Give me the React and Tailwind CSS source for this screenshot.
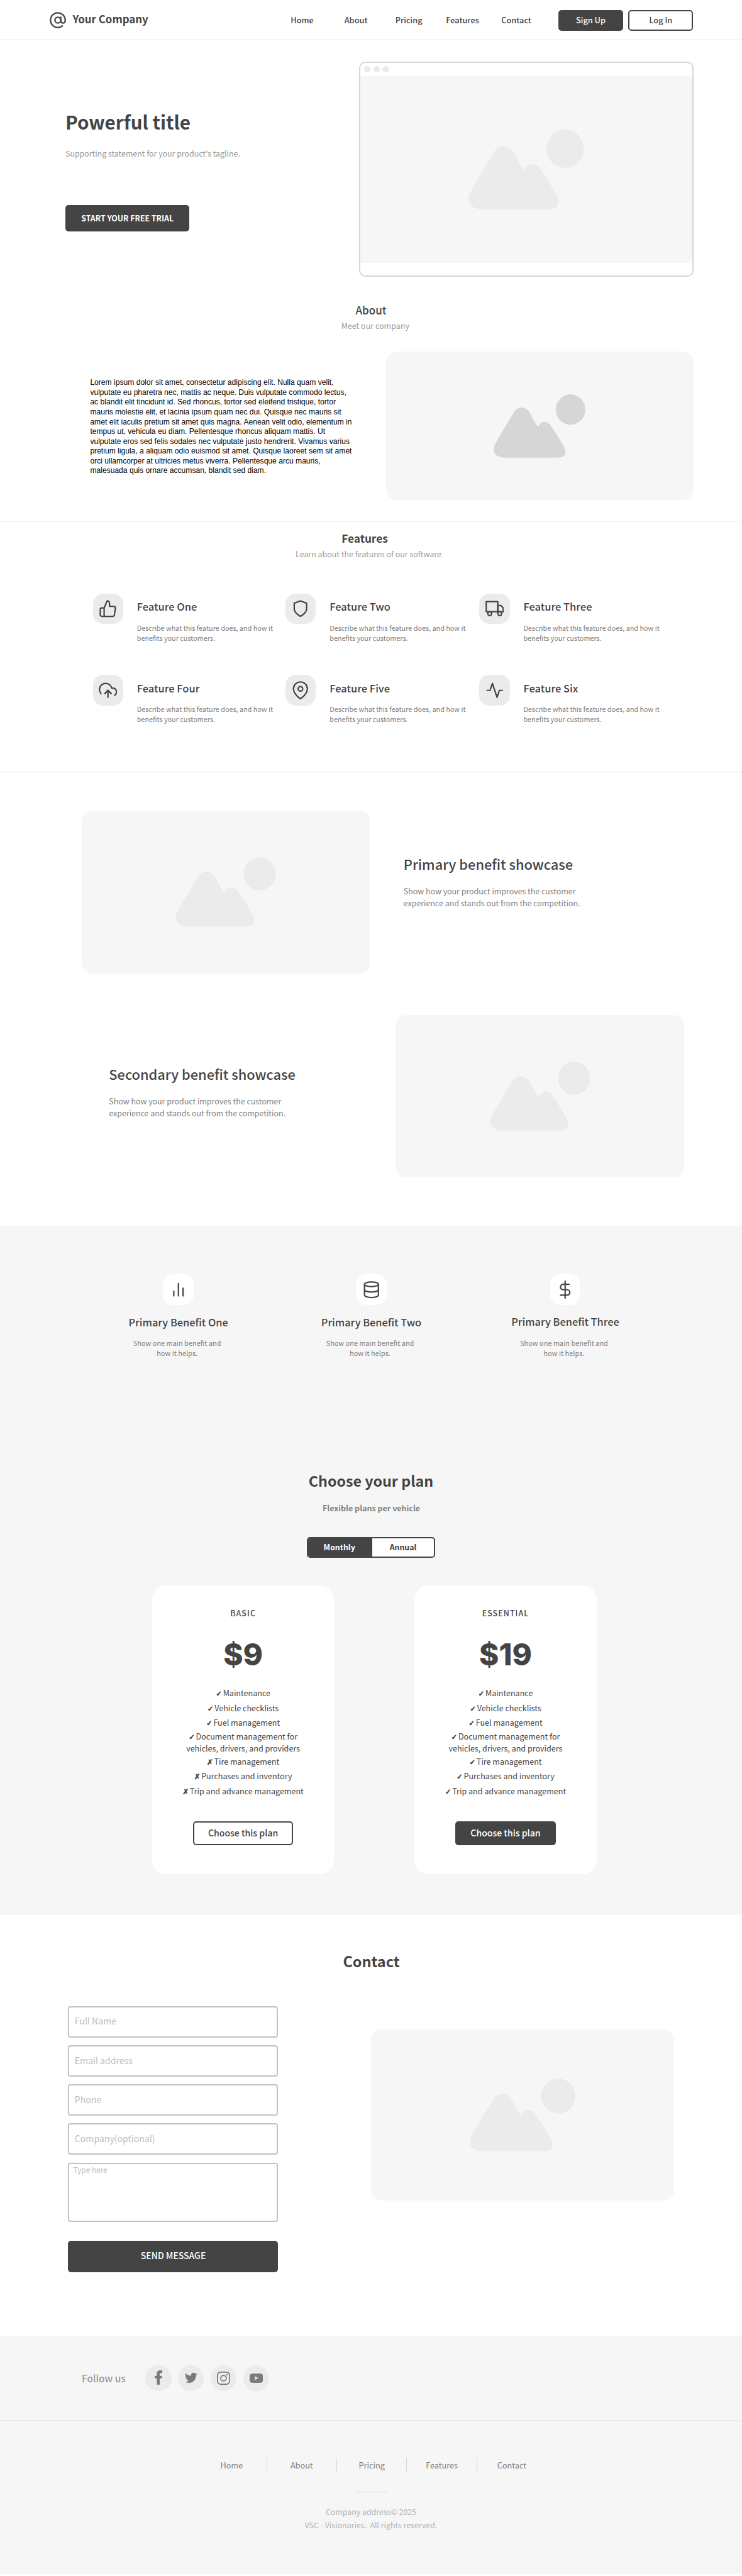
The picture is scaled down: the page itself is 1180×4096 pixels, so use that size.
import React from 'react';
import {
  FiActivity, FiAtSign, FiBarChart2, FiDatabase, FiDollarSign,
  FiMapPin, FiShield, FiThumbsUp, FiTruck, FiUploadCloud,
} from 'react-icons/fi';
import { FaTwitter } from 'react-icons/fa';

function Mountains({ className }) {
  return (
    <svg viewBox="0 0 637 441" fill="currentColor" className={className}>
      <path d="M192 92C170 92 152 106 139 128C100 195 40 290 12 343C4 355 0 370 0 383C0 420 35 440 76 440H446C480 440 499 425 499 401C499 385 494 374 488 363C460 310 420 253 396 217C385 200 370 191 352 191C335 191 318 205 308 226C290 203 272 168 256 136C241 108 218 92 192 92Z" />
      <ellipse cx="534" cy="106" rx="103" ry="105.5" />
    </svg>
  );
}

const nav = [
  ['Home', 'w-[85.5px]'],
  ['About', 'w-[81.1px]'],
  ['Pricing', 'w-[80.5px]'],
  ['Features', 'w-[88px]'],
  ['Contact', 'w-[90.7px]'],
];

function Header() {
  return (
    <header className="flex h-16 items-start border-b-2 border-[#f5f5f5] pl-[78px]">
      <FiAtSign className="mt-[17.5px] size-[28px]" />
      <span className="mt-[18px] ml-[9.5px] w-[346.7px] text-[16.86px] leading-6 font-bold">Your Company</span>
      <nav className="mt-[22.4px] flex text-[12.75px] leading-5 font-medium">
        {nav.map(([label, width]) => (
          <a key={label} className={width}>{label}</a>
        ))}
      </nav>
      <div className="mt-[15.5px] flex gap-[8.4px] text-[12.74px] leading-5 font-medium">
        <button className="flex h-[33px] w-[103px] items-center justify-center rounded-[5px] bg-[#444] pb-[1px] text-white">Sign Up</button>
        <button className="flex h-[33px] w-[103px] items-center justify-center rounded-[5px] border-2 border-[#444] pb-[1px]">Log In</button>
      </div>
    </header>
  );
}

function Hero() {
  return (
    <section className="flex h-[396px] items-start pl-[104px]">
      <div className="flex w-[467px] flex-col items-start pt-[110.3px]">
        <h1 className="text-[29.6px] leading-10 font-bold">Powerful title</h1>
        <p className="mt-[19.8px] text-[12.38px] leading-5 text-[#999]">Supporting statement for your product's tagline.</p>
        <button className="mt-[71.9px] h-[42px] w-[197.4px] rounded-[5px] bg-[#444] text-[12.34px] leading-5 font-bold text-white">START YOUR FREE TRIAL</button>
      </div>
      <div className="mt-[33.5px] flex h-[342px] w-[532px] flex-col overflow-hidden rounded-[10px] border-2 border-[#d6d6d6]">
        <div className="flex h-[21.6px] items-center gap-[4.3px] pl-[6px]">
          <i className="size-[10.4px] rounded-full bg-[#ebebeb]" />
          <i className="size-[10.4px] rounded-full bg-[#ebebeb]" />
          <i className="size-[10.4px] rounded-full bg-[#ebebeb]" />
        </div>
        <div className="flex h-[297px] items-center justify-center bg-[#f6f6f6]">
          <Mountains className="h-[127px] w-[183.3px] text-[#ebebeb]" />
        </div>
      </div>
    </section>
  );
}

const lorem = [
  'Lorem ipsum dolor sit amet, consectetur adipiscing elit. Nulla quam velit,',
  'vulputate eu pharetra nec, mattis ac neque. Duis vulputate commodo lectus,',
  'ac blandit elit tincidunt id. Sed rhoncus, tortor sed eleifend tristique, tortor',
  'mauris molestie elit, et lacinia ipsum quam nec dui. Quisque nec mauris sit',
  'amet elit iaculis pretium sit amet quis magna. Aenean velit odio, elementum in',
  'tempus ut, vehicula eu diam. Pellentesque rhoncus aliquam mattis. Ut',
  'vulputate eros sed felis sodales nec vulputate justo hendrerit. Vivamus varius',
  'pretium ligula, a aliquam odio euismod sit amet. Quisque laoreet sem sit amet',
  'orci ullamcorper at ultricies metus viverra. Pellentesque arcu mauris,',
  'malesuada quis ornare accumsan, blandit sed diam.',
];

function About() {
  return (
    <section className="h-[370px] border-b-2 border-[#f5f5f5] pt-[21.2px]">
      <h2 className="text-center text-[17.06px] leading-6 font-medium">About</h2>
      <p className="mt-[3.2px] pl-[13.6px] text-center text-[12.52px] leading-5 text-[#999]">Meet our company</p>
      <div className="mt-[30.6px] flex items-start pl-[143.4px]">
        <p className="mt-[42.4px] w-[470.3px] font-['Liberation_Sans',sans-serif] text-[12.1px] leading-[15.54px] text-black">
          {lorem.map((line) => (
            <span key={line} className="block whitespace-nowrap">{line}</span>
          ))}
        </p>
        <div className="flex h-[236.5px] w-[489px] items-center justify-center rounded-[17px] bg-[#f6f6f6]">
          <Mountains className="h-[101px] w-[146px] text-[#d6d6d6]" />
        </div>
      </div>
    </section>
  );
}

const features = [
  ['Feature One', FiThumbsUp],
  ['Feature Two', FiShield],
  ['Feature Three', FiTruck],
  ['Feature Four', FiUploadCloud],
  ['Feature Five', FiMapPin],
  ['Feature Six', FiActivity],
];

function Features() {
  return (
    <section className="h-[399px] border-b-2 border-[#f5f5f5] pt-[13.6px]">
      <h2 className="pr-[20px] text-center text-[17.24px] leading-6 font-bold">Features</h2>
      <p className="mt-[3.4px] pr-[8px] text-center text-[12.43px] leading-5 text-[#999]">Learn about the features of our software</p>
      <div className="mt-[53px] grid auto-rows-[129.5px] grid-cols-[306.5px_308.2px_306px] pl-[147.6px]">
        {features.map(([title, Icon]) => (
          <div key={title} className="flex items-start gap-[21.8px]">
            <div className="flex size-[48.3px] shrink-0 items-center justify-center rounded-[16px] bg-[#ebebeb]">
              <Icon className="size-[29.5px]" strokeWidth={1.8} />
            </div>
            <div className="mt-[8.4px]">
              <h3 className="text-[16.48px] leading-6 font-medium">{title}</h3>
              <p className="mt-[13.2px] text-[10.84px] leading-[16.4px] whitespace-nowrap text-[#808080]">
                Describe what this feature does, and how it<br />benefits your customers.
              </p>
            </div>
          </div>
        ))}
      </div>
    </section>
  );
}

function ShowcaseText({ title, className }) {
  return (
    <div className={className}>
      <h2 className="text-[21.8px] leading-7 font-medium">{title}</h2>
      <p className="mt-[20.5px] text-[12.41px] leading-[19px] whitespace-nowrap text-[#808080]">
        Show how your product improves the customer<br />experience and stands out from the competition.
      </p>
    </div>
  );
}

function ShowcaseImage() {
  return (
    <div className="flex h-[258.6px] w-[458.5px] items-center justify-center rounded-[17px] bg-[#f6f6f6]">
      <Mountains className="h-[110px] w-[160.3px] text-[#ebebeb]" />
    </div>
  );
}

function Showcases() {
  return (
    <section className="h-[719.5px] pt-[60.2px]">
      <div className="flex items-start gap-[53.7px] pl-[129.6px]">
        <ShowcaseImage />
        <ShowcaseText title="Primary benefit showcase" className="mt-[70.4px]" />
      </div>
      <div className="mt-[65.9px] flex items-start pl-[173.3px]">
        <ShowcaseText title="Secondary benefit showcase" className="mt-[79.9px] w-[456.2px]" />
        <ShowcaseImage />
      </div>
    </section>
  );
}

const benefits = [
  ['Primary Benefit One', FiBarChart2, 'mt-[15px] mb-[13.3px]'],
  ['Primary Benefit Two', FiDatabase, 'mt-[15px] mb-[13.3px]'],
  ['Primary Benefit Three', FiDollarSign, 'mt-[14px] mb-[14.3px]'],
];

function Benefits() {
  return (
    <div className="grid grid-cols-[305.7px_308px_309px] pl-[130.8px]">
      {benefits.map(([title, Icon, spacing]) => (
        <div key={title} className="flex flex-col items-center text-center">
          <div className="flex size-[48.3px] items-center justify-center rounded-[16px] bg-white">
            <Icon className="size-[29.5px]" strokeWidth={1.8} />
          </div>
          <h3 className={`text-[16.35px] leading-6 font-medium ${spacing}`}>{title}</h3>
          <p className="pr-[4px] text-[10.97px] leading-[16.4px] text-[#808080]">
            Show one main benefit and<br />how it helps.
          </p>
        </div>
      ))}
    </div>
  );
}

const plans = [
  { name: 'BASIC', price: '$9', full: false, button: 'border-2 border-[#444]' },
  { name: 'ESSENTIAL', price: '$19', full: true, button: 'bg-[#444] text-white' },
];

function Mark({ on }) {
  return <span className="mr-[-1px] font-['DejaVu_Sans'] text-[11.5px] leading-none font-bold [-webkit-text-stroke:0.7px]">{on ? '✓' : '✗'}</span>;
}

function Plan({ name, price, full, button }) {
  return (
    <article className="flex h-[458.7px] w-[289.6px] flex-col items-center rounded-[22px] bg-white pt-[34.6px]">
      <h3 className="text-[12.37px] leading-5 font-medium tracking-[1.1px]">{name}</h3>
      <p className="mt-[27.3px] font-['Inter',sans-serif] text-[47.5px] leading-[56px] font-extrabold">{price}</p>
      <ul className="mt-[22.2px] text-center text-[12.55px] leading-[18.9px]">
        <li className="py-[2.25px]"><Mark on /> Maintenance</li>
        <li className="py-[2.25px]"><Mark on /> Vehicle checklists</li>
        <li className="py-[2.25px]"><Mark on /> Fuel management</li>
        <li className="mt-[0.8px]"><Mark on /> Document management for<br />vehicles, drivers, and providers</li>
        <li className="py-[2.25px]"><Mark on={full} /> Tire management</li>
        <li className="py-[2.25px]"><Mark on={full} /> Purchases and inventory</li>
        <li className="py-[2.25px]"><Mark on={full} /> Trip and advance management</li>
      </ul>
      <button className={`mt-[36.1px] flex h-[38.4px] w-[159.7px] items-center justify-center rounded-[5px] pb-[2px] text-[14.1px] leading-5 font-medium ${button}`}>
        Choose this plan
      </button>
    </article>
  );
}

function Pricing() {
  return (
    <section className="h-[1096.1px] bg-[#f6f6f6] pt-[77.8px]">
      <Benefits />
      <h2 className="mt-[178.5px] text-center text-[23.28px] leading-8 font-bold">Choose your plan</h2>
      <p className="mt-[17.4px] pl-[1px] text-center text-[12.5px] leading-5 font-bold text-[#808080]">Flexible plans per vehicle</p>
      <div className="mx-auto mt-[36.2px] flex h-[33px] w-[204.6px] overflow-hidden rounded-[5px] border-2 border-[#444] bg-white text-[12.34px] leading-5 font-bold">
        <span className="flex w-[102px] items-center justify-center bg-[#444] pr-[2px] pb-[1px] text-white">Monthly</span>
        <span className="flex flex-1 items-center justify-center pb-[1px]">Annual</span>
      </div>
      <div className="mt-[44.1px] flex gap-[127.8px] pl-[241.8px]">
        {plans.map((plan) => <Plan key={plan.name} {...plan} />)}
      </div>
    </section>
  );
}

function Contact() {
  return (
    <section className="h-[669.2px] pt-[57.1px]">
      <h2 className="pl-px text-center text-[23.45px] leading-8 font-bold">Contact</h2>
      <div className="mt-[56.2px] flex items-start pl-[107.8px]">
        <form className="mr-[147.8px] flex w-[334.5px] flex-col gap-[12.4px]">
          {['Full Name', 'Email address', 'Phone', 'Company(optional)'].map((label) => (
            <label key={label} className="flex h-[49.8px] items-center rounded-[4px] border-2 border-[#c2c2c2] pb-[2.6px] pl-[9px] text-[14.1px] leading-5 text-[#bdbdbd]">{label}</label>
          ))}
          <label className="h-[94.2px] rounded-[4px] border-2 border-[#c2c2c2] pt-[1.6px] pl-[6.7px] text-[11.84px] leading-4 text-[#bdbdbd]">Type here</label>
          <button type="button" className="mt-[17.7px] flex h-[49.7px] items-center justify-center rounded-[5px] bg-[#444] pb-[2.6px] pl-px text-[13.98px] leading-5 font-medium text-white">SEND MESSAGE</button>
        </form>
        <div className="mt-[37.3px] flex h-[272.3px] w-[482.3px] items-center justify-center rounded-[17px] bg-[#f6f6f6]">
          <Mountains className="h-[116px] w-[168.6px] text-[#ebebeb]" />
        </div>
      </div>
    </section>
  );
}

function Facebook() {
  return (
    <svg viewBox="0 0 42 79" fill="currentColor" className="mb-[2px] h-[22.7px] w-[12px]">
      <path d="M42 0V15H33C29 15 28 17 28 21V30H41L39 44H28V79H12V44H0V30H12V19C12 6 20 0 31 0Z" />
    </svg>
  );
}

function Instagram() {
  return (
    <svg viewBox="0 0 73 73" fill="none" stroke="currentColor" className="size-[21px]">
      <rect x="3" y="3" width="67" height="67" rx="18" strokeWidth="6" />
      <circle cx="36.500" cy="36.500" r="15.500" strokeWidth="6" />
      <circle cx="55.500" cy="17.500" r="4" fill="currentColor" stroke="none" />
    </svg>
  );
}

function YouTube() {
  return (
    <svg viewBox="0 0 74 52" fill="currentColor" className="h-[15px] w-[21.3px]">
      <path fillRule="evenodd" d="M14 1Q37 -1 60 1Q72 1 73 12Q75 26 73 40Q72 51 60 51Q37 53 14 51Q2 51 1 40Q-1 26 1 12Q2 1 14 1ZM29 15V36L48 25.500Z" />
    </svg>
  );
}

const socials = [
  ['facebook', <Facebook />],
  ['twitter', <FaTwitter className="size-[19.8px]" />],
  ['instagram', <Instagram />],
  ['youtube', <YouTube />],
];

const footerNav = ['Home', 'About', 'Pricing', 'Features', 'Contact'];

function Footer() {
  return (
    <footer className="h-[379.2px] bg-[#f6f6f6]">
      <div className="flex h-[136.7px] items-start border-b-2 border-[#ebebeb] pt-[46.9px] pl-[130px]">
        <span className="mt-[8.8px] w-[101.2px] text-[15.42px] leading-6 font-medium text-[#999]">Follow us</span>
        <div className="flex gap-[10.4px]">
          {socials.map(([name, icon]) => (
            <a key={name} className="flex size-[41.4px] items-center justify-center rounded-full bg-[#ebebeb] text-[#7a7a7a]">{icon}</a>
          ))}
        </div>
      </div>
      <nav className="ml-[312.2px] flex pt-[58.3px] text-[12.7px] leading-5 text-[#808080]">
        {footerNav.map((label) => (
          <a key={label} className="h-[21.6px] w-[111.4px] border-l border-[#d6d6d6] pt-[1.4px] text-center first:border-transparent">{label}</a>
        ))}
      </nav>
      <hr className="mx-auto mt-[30.2px] h-[2px] w-[49px] border-0 bg-[#ebebeb]" />
      <p className="mt-[21.4px] text-center text-[12.4px] leading-[21.5px] whitespace-pre text-[#b0b0b0]">
        {'Company address© 2025\nVSC - Visionaries.  All rights reserved.'}
      </p>
    </footer>
  );
}

export default function App() {
  return (
    <div className="h-[4096px] w-[1180px] overflow-hidden bg-white font-['Noto_Sans_CJK_SC',sans-serif] text-[#444]">
      <Header />
      <Hero />
      <About />
      <Features />
      <Showcases />
      <Pricing />
      <Contact />
      <Footer />
    </div>
  );
}
